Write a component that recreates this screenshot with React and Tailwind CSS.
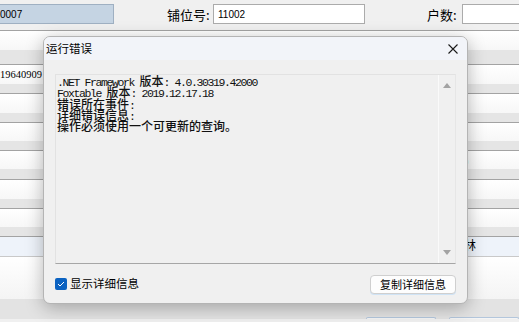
import React from "react";

const cjk = "font-['Noto_Sans_CJK_SC',sans-serif]";
const mono = "font-['Liberation_Mono','Noto_Sans_CJK_SC',monospace] text-[11.5px] tracking-[-1.4px] leading-[11px]";

const Row = ({ white = 19, gray = 9, children }) => (
  <div className="flex flex-col border-b border-[#a3a3a3]">
    <div
      className="relative bg-gradient-to-b from-[#ffffff] to-[#f7f7f7]"
      style={{ height: white }}
    >
      {children}
    </div>
    <div className="bg-[#e5e5e5]" style={{ height: gray }} />
  </div>
);

const Ascii = ({ children }) => <span className={mono}>{children}</span>;

const Line = ({ children }) => (
  <div className="h-[11.25px] overflow-visible whitespace-pre leading-[11px]">{children}</div>
);

export default function App() {
  return (
    <div className="relative w-[519px] h-[322px] overflow-hidden bg-[#f0f0f0] text-black font-['Liberation_Sans',sans-serif]">
      {/* form behind */}
      <div className="flex h-[31px] items-center border-b border-[#a3a3a3] bg-[#f0f0f0] pb-[2px]">
        <div className="flex h-[20px] w-[114px] items-center border border-l-0 border-[#9fb0c2] bg-[#c5d4e3] text-[10px]">
          0007
        </div>
        <div className={`${cjk} ml-[53px] w-[46px] text-[13px] leading-none`}>铺位号:</div>
        <div className="flex h-[20px] w-[152px] items-center border border-[#ababab] bg-white pl-[4px] text-[10px]">
          11002
        </div>
        <div className={`${cjk} ml-[62px] w-[35px] text-[13px] leading-none`}>户数:</div>
        <div className="h-[20px] flex-1 border border-r-0 border-[#ababab] bg-white" />
      </div>
      <Row white={19} gray={14} />
      <Row>
        <span className="absolute left-0 top-[2px] text-[10.5px] font-['Liberation_Serif',serif]">19640909</span>
      </Row>
      <Row />
      <Row white={18} gray={9} />
      <Row white={18} gray={10}>
        <span className="absolute left-[462px] top-[3px] text-[11px]">0</span>
      </Row>
      <Row />
      <Row white={18} gray={9} />
      <div className="relative h-[20px] border-b border-[#c9c9c9] bg-[#eef3fa]">
        <span className={`${cjk} absolute left-[464px] top-[2px] text-[12px] leading-none`}>林</span>
      </div>
      <div className="h-[42px] bg-gradient-to-b from-white to-[#f4f4f4]" />
      <div className="flex h-[20px] items-end gap-[13px] bg-[#e3e3e3] pl-[366px]">
        <div className="h-[2px] w-[70px] rounded-t-[3px] border border-b-0 border-[#b3c6dc] bg-[#f5f5f5]" />
        <div className="h-[2px] w-[70px] rounded-t-[3px] border border-b-0 border-[#b3c6dc] bg-[#f5f5f5]" />
      </div>

      {/* error dialog */}
      <div className="absolute left-[43px] top-[36px] flex h-[268px] w-[425px] flex-col overflow-hidden rounded-[7px] border border-[#b4b4b4] bg-[#f0f0f0] shadow-[0_4px_18px_rgba(0,0,0,0.28)]">
        <div className="flex h-[23px] items-center justify-between bg-[#f2f4f9] pl-[2px] pr-[9px]">
          <span className={`${cjk} text-[11.5px] leading-none`}>运行错误</span>
          <svg width="10" height="10" viewBox="0 0 10 10">
            <path d="M0.5 0.5 L9.5 9.5 M9.5 0.5 L0.5 9.5" stroke="#1a1a1a" strokeWidth="1.1" fill="none" />
          </svg>
        </div>
        <div className="ml-[11px] mt-[14px] flex h-[190px] w-[401px] border-l border-t border-[#e2e2e2] border-b border-b-[#a6a6a6] border-r border-r-[#e6e6e6]">
          <div className={`${cjk} flex-1 pl-[1px] pt-0 text-[12px] font-medium text-[#111]`}>
            <Line>
              <Ascii>.NET Framework </Ascii>版本<Ascii>: 4.0.30319.42000</Ascii>
            </Line>
            <Line>
              <Ascii>Foxtable </Ascii>版本<Ascii>: 2019.12.17.18</Ascii>
            </Line>
            <Line>
              错误所在事件<Ascii>:</Ascii>
            </Line>
            <Line>
              详细错误信息<Ascii>:</Ascii>
            </Line>
            <Line>操作必须使用一个可更新的查询。</Line>
          </div>
          <div className="flex w-[17px] flex-col items-center justify-between border-l border-[#fafafa] py-[8px]">
            <svg width="8" height="5" viewBox="0 0 8 5">
              <path d="M4 0 L8 5 L0 5 Z" fill="#a3a3a3" />
            </svg>
            <svg width="8" height="5" viewBox="0 0 8 5">
              <path d="M0 0 L8 0 L4 5 Z" fill="#a3a3a3" />
            </svg>
          </div>
        </div>
        <div className="ml-[11px] mt-[10px] flex h-[20px] w-[401px] items-center justify-between">
          <label className="flex items-center gap-[3px]">
            <span className="flex h-[12px] w-[12px] items-center justify-center rounded-[2px] bg-[#0b62c1]">
              <svg width="8" height="6" viewBox="0 0 8 6">
                <path d="M1 3 L3 5 L7 1" stroke="white" strokeWidth="1" fill="none" />
              </svg>
            </span>
            <span className={`${cjk} text-[11.5px] leading-none`}>显示详细信息</span>
          </label>
          <button className={`${cjk} flex h-[19px] w-[86px] items-center justify-center rounded-[4px] border border-[#cfcfcf] bg-[#fdfdfd] text-[11px] leading-none shadow-[0_1px_0_#cfe3f5]`}>
            复制详细信息
          </button>
        </div>
      </div>
    </div>
  );
}
